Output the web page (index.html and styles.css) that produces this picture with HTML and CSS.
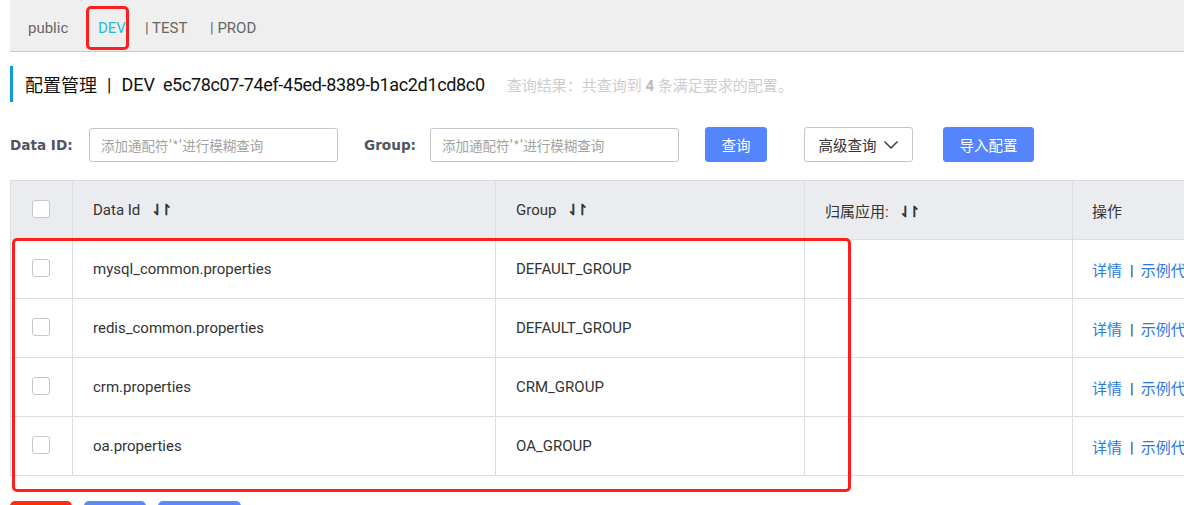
FILE: index.html
```html
<!DOCTYPE html>
<html lang="zh-CN">
<head>
<meta charset="utf-8">
<link rel="stylesheet" href="styles.css">
</head>
<body>
<div class="page">
  <div class="envbar">
    <span class="env e1">public</span>
    <span class="env e2 active">DEV</span>
    <span class="env e3">| TEST</span>
    <span class="env e4">| PROD</span>
  </div>
  <div class="titlerow">
    <span class="title">配置管理</span><span class="title tsep">|</span><span class="title">DEV</span><span class="title tid">e5c78c07-74ef-45ed-8389-b1ac2d1cd8c0</span>
    <span class="result">查询结果：共查询到 <b>4</b> 条满足要求的配置。</span>
  </div>
  <div class="searchrow">
    <label class="lbl">Data ID:</label>
    <input class="inp" placeholder="添加通配符'*'进行模糊查询">
    <label class="lbl lbl2">Group:</label>
    <input class="inp" placeholder="添加通配符'*'进行模糊查询">
    <button class="btn primary b-query">查询</button>
    <button class="btn normal b-adv">高级查询 <svg width="16" height="10" viewBox="0 0 16 10"><path d="M1.5 1.5 L8 8 L14.5 1.5" fill="none" stroke="#333" stroke-width="1.4"/></svg></button>
    <button class="btn primary b-import">导入配置</button>
  </div>
  <table class="tbl">
    <colgroup>
      <col class="c1"><col class="c2"><col class="c3"><col class="c4"><col class="c5">
    </colgroup>
    <thead>
      <tr>
        <th><span class="cb"></span></th>
        <th>Data Id <span class="sort">⇃↾</span></th>
        <th>Group <span class="sort">⇃↾</span></th>
        <th>归属应用: <span class="sort">⇃↾</span></th>
        <th>操作</th>
      </tr>
    </thead>
    <tbody>
      <tr><td><span class="cb"></span></td><td>mysql_common.properties</td><td>DEFAULT_GROUP</td><td></td><td class="ops"><a class="lk">详情</a><span class="sep">|</span><a class="lk">示例代码</a></td></tr>
      <tr><td><span class="cb"></span></td><td>redis_common.properties</td><td>DEFAULT_GROUP</td><td></td><td class="ops"><a class="lk">详情</a><span class="sep">|</span><a class="lk">示例代码</a></td></tr>
      <tr><td><span class="cb"></span></td><td>crm.properties</td><td>CRM_GROUP</td><td></td><td class="ops"><a class="lk">详情</a><span class="sep">|</span><a class="lk">示例代码</a></td></tr>
      <tr><td><span class="cb"></span></td><td>oa.properties</td><td>OA_GROUP</td><td></td><td class="ops"><a class="lk">详情</a><span class="sep">|</span><a class="lk">示例代码</a></td></tr>
    </tbody>
  </table>
  <div class="bottombtns">
    <span class="bb red"></span><span class="bb blue1"></span><span class="bb blue2"></span>
  </div>
  <div class="mark mark-dev"></div>
  <div class="mark mark-table"></div>
</div>
</body>
</html>
```
FILE: styles.css
```css
html, body { margin: 0; padding: 0; background: #fff; overflow: hidden; }
body { width: 1184px; height: 505px; font-family: Roboto, "Noto Sans CJK SC", "Liberation Sans", sans-serif; color: #333; font-size: 14px; }
.page { position: relative; padding-left: 10px; }
.envbar { height: 51px; box-sizing: border-box; padding-top: 4px; background: #efefef; border-bottom: 1px solid #c9c9c9; display: flex; align-items: center; padding-left: 18px; }
.envbar { height: 52px; }
.env { color: #666; font-size: 15px; line-height: 20px; white-space: pre; }
.e1 { width: 70px; }
.e2 { width: 47px; }
.e3 { width: 65px; }
.env.active { color: #19bfd8; }
.titlerow { margin-top: 14px; height: 36px; border-left: 3px solid #0f9bd7; display: flex; align-items: center; padding-left: 12px; }
.title { font-size: 18px; color: #111; }
.tsep { margin: 0 10px 0 10px; }
.tid { margin-left: 8px; letter-spacing: -0.35px; }
.result { margin-left: 22px; color: #cdcdcd; font-size: 15px; }
.result b { color: #bbb; }
.searchrow { margin-top: 25px; display: flex; align-items: center; height: 35px; }
.lbl { font-family: "DejaVu Sans", sans-serif; font-weight: bold; color: #4f5560; font-size: 13.6px; width: 79px; }
.lbl2 { width: 66px; margin-left: 26px; }
.inp { width: 249px; height: 34px; box-sizing: border-box; border: 1px solid #c4c6cf; border-radius: 3px; padding: 0 11px; font-family: "Noto Sans CJK SC", sans-serif; font-size: 13.5px; color: #333; outline: none; }
.inp::placeholder { color: #a3a3a3; }
.btn { height: 35px; box-sizing: border-box; border-radius: 3px; font-family: "Noto Sans CJK SC", sans-serif; font-size: 14.5px; display: flex; align-items: center; justify-content: center; padding: 0; cursor: pointer; }
.primary { background: #5485fd; border: 1px solid #5485fd; color: #fff; }
.normal { background: #fff; border: 1px solid #c4c6cf; color: #333; gap: 6px; }
.b-query { width: 62px; margin-left: 26px; }
.b-adv { width: 109px; margin-left: 37px; }
.b-import { width: 91px; margin-left: 30px; }
.tbl { margin-top: 18px; border-collapse: collapse; table-layout: fixed; width: 1202px; }
.c1 { width: 62px; } .c2 { width: 423px; } .c3 { width: 309px; } .c4 { width: 268px; } .c5 { width: 140px; }
.tbl th, .tbl td { border: 1px solid #dcdee3; height: 58px; padding: 0 0 0 20px; text-align: left; font-weight: normal; font-size: 15px; color: #333; white-space: nowrap; overflow: hidden; }
.tbl th:first-child, .tbl td:first-child { padding-left: 21px; }
.tbl thead th { background: #ebecf0; }
.tbl th:last-child, .tbl td:last-child { padding-left: 19px; }
.cb { display: inline-block; width: 18px; height: 18px; box-sizing: border-box; border: 1px solid #c4c6cf; border-radius: 3px; background: #fff; vertical-align: middle; position: relative; top: -2px; }
.sort { font-size: 15px; letter-spacing: -4px; margin-left: 7px; color: #333; font-weight: bold; }
.ops { font-size: 15px; }
.lk { color: #2a7ae2; }
.sep { color: #333; margin: 0 7px 0 8px; }
.bottombtns { margin-top: 25px; display: flex; gap: 12px; }
.bb { height: 24px; border-radius: 5px; display: block; }
.red { width: 62px; background: #fe2d10; }
.blue1 { width: 62px; background: #5a8cf8; }
.blue2 { width: 83px; background: #5a8cf8; }
.mark { position: absolute; border: 3px solid #ff1f1a; border-radius: 5px; box-sizing: border-box; }
.mark-dev { left: 86px; top: 6px; width: 43px; height: 44px; }
.mark-table { left: 12px; top: 238px; width: 839px; height: 254px; }
```
